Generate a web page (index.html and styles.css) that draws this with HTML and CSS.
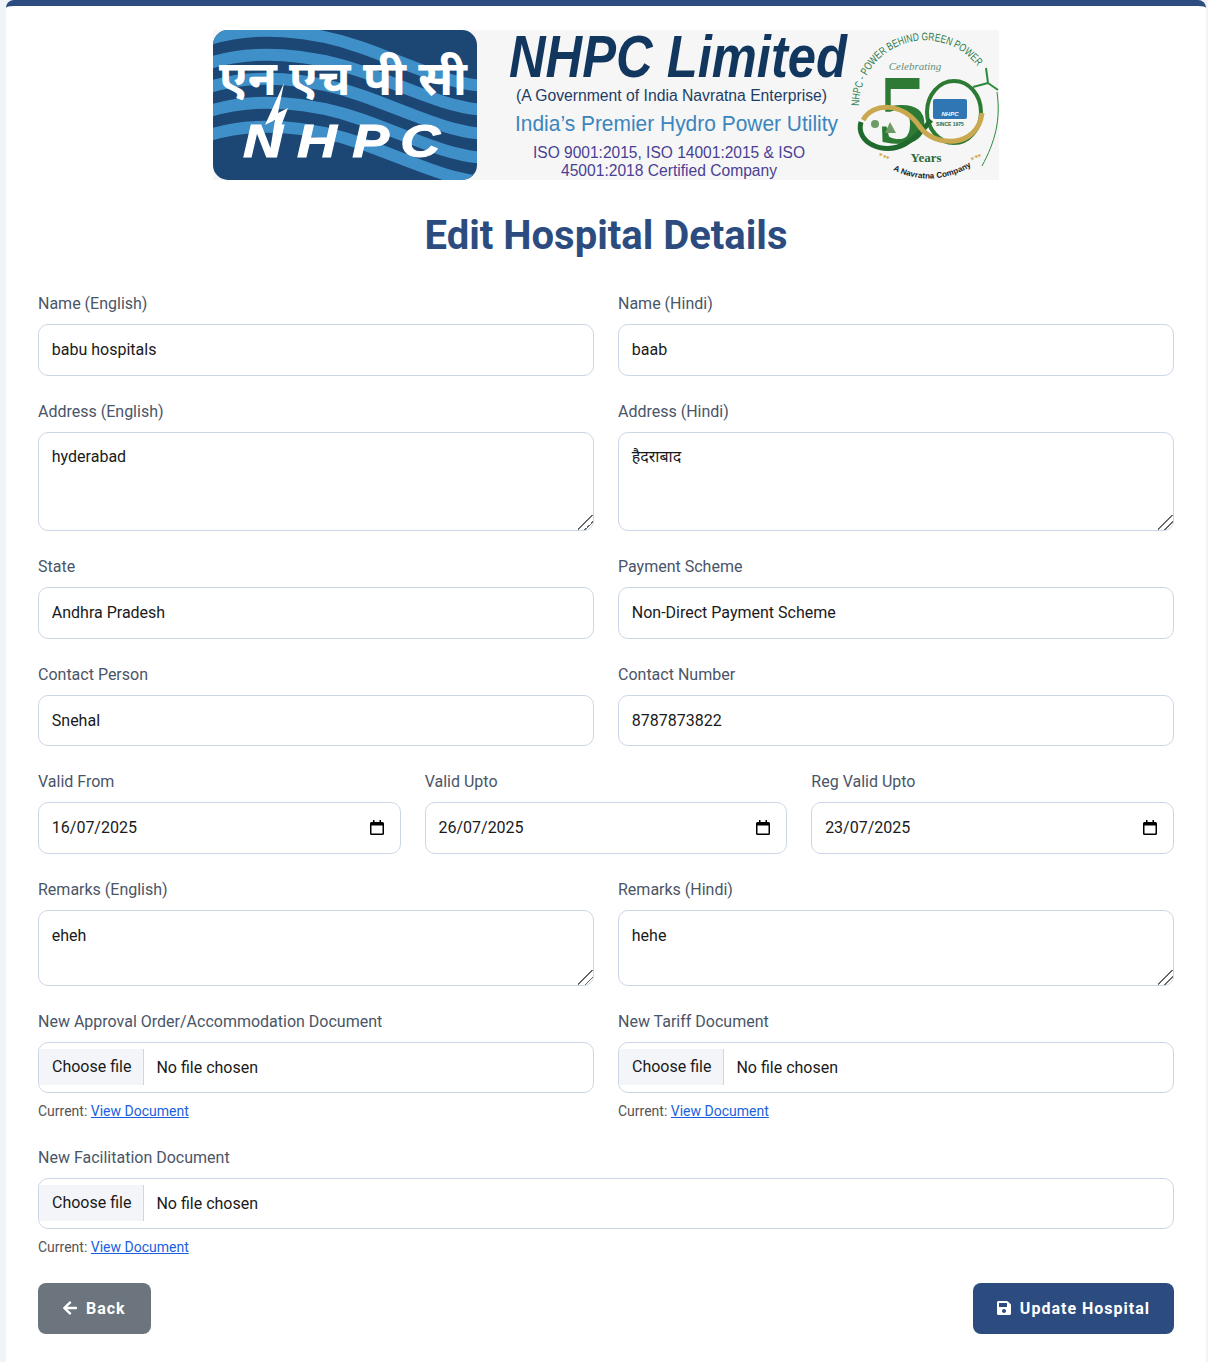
FILE: index.html
```html
<!DOCTYPE html>
<html lang="en">
<head>
    <meta charset="UTF-8">
    <meta name="viewport" content="width=device-width, initial-scale=1.0">
    <title>Edit Hospital Details</title>
    <link rel="stylesheet" href="styles.css">
</head>
<body>
    <div class="card">
        <!-- Banner -->
        <svg class="banner" viewBox="0 0 786 150" width="786" height="150" role="img" aria-label="NHPC Limited">
            <defs>
                <clipPath id="logoClip"><rect width="264" height="150" rx="15"/></clipPath>
                <path id="wave" d="M-6 16 C 40 0, 100 6, 150 24 S 235 60, 272 62" fill="none" stroke="#3f8fc8" stroke-width="12"/>
                <path id="arcTop" d="M646 76 A 66 66 0 0 1 765 37"/>
                <path id="arcBottom" d="M680 140 A 80 80 0 0 0 757 137"/>
            </defs>
            <rect width="786" height="150" fill="#f6f6f6"/>
            <g clip-path="url(#logoClip)">
                <rect width="264" height="150" fill="#1c4673"/>
                <use href="#wave" y="-6"/>
                <use href="#wave" y="18"/>
                <use href="#wave" y="42"/>
                <use href="#wave" y="66"/>
                <use href="#wave" y="90"/>
            </g>
            <text class="logo-hindi" x="6" y="65" textLength="248" lengthAdjust="spacingAndGlyphs">एन एच पी सी</text>
            <text class="logo-nhpc" transform="translate(0 127) scale(1.2 1)" x="25 70 116 156" y="0">NHPC</text>
            <path d="M71 53 L52 95 L62 90 L56 127 L75 78 L65 83 Z" fill="#fff"/>

            <text class="b-title" x="296" y="47" textLength="338" lengthAdjust="spacingAndGlyphs">NHPC Limited</text>
            <text class="b-govt" x="303" y="71" textLength="311" lengthAdjust="spacingAndGlyphs">(A Government of India Navratna Enterprise)</text>
            <text class="b-utility" x="302" y="101" textLength="323" lengthAdjust="spacingAndGlyphs">India’s Premier Hydro Power Utility</text>
            <text class="b-iso" x="320" y="128" textLength="272" lengthAdjust="spacingAndGlyphs">ISO 9001:2015, ISO 14001:2015 &amp; ISO</text>
            <text class="b-iso" x="348" y="146" textLength="216" lengthAdjust="spacingAndGlyphs">45001:2018 Certified Company</text>

            <!-- 50 years emblem -->
            <text class="e-arc"><textPath href="#arcTop" textLength="164" lengthAdjust="spacingAndGlyphs">NHPC - POWER BEHIND GREEN POWER</textPath></text>
            <text class="e-celebrate" x="702" y="40">Celebrating</text>
            <text class="e-five" x="690" y="113">5</text>
            <ellipse cx="741" cy="82" rx="27" ry="31" fill="none" stroke="#2c7a34" stroke-width="4"/>
            <path d="M648 92 C 642 112, 670 126, 692 114 C 704 107, 712 98, 718 90" fill="none" stroke="#1f6a2c" stroke-width="5"/>
            <path d="M650 90 C 660 72, 690 72, 707 97 C 722 118, 765 118, 769 83" fill="none" stroke="#c9a84f" stroke-width="5"/>
            <rect x="720" y="69" width="34" height="20" rx="2" fill="#2f76b5"/>
            <text class="e-mini" x="737" y="86">NHPC</text>
            <text class="e-since" x="737" y="96">SINCE 1975</text>
            <circle cx="662" cy="94" r="4" fill="#6d9c68"/>
            <path d="M672 103 l5 -11 l6 11 Z" fill="#6d9c68"/>
            <path d="M775 53 L773 38 M775 53 L760 57 M775 53 L785 60" stroke="#2c8a3c" stroke-width="2" fill="none"/>
            <path d="M784 62 C 788 90, 782 112, 769 136" stroke="#2c8a3c" stroke-width="1" fill="none"/>
            <text class="e-years" x="713" y="132">Years</text>
            <text class="e-stars" transform="translate(665 125) rotate(25)">★★★</text>
            <text class="e-stars" transform="translate(758 131) rotate(-25)">★★★</text>
            <text class="e-navratna"><textPath href="#arcBottom" textLength="82" lengthAdjust="spacingAndGlyphs">A Navratna Company</textPath></text>
        </svg>

        <h1>Edit Hospital Details</h1>

        <form class="hospital-form">
            <div class="row two">
                <div class="field">
                    <label>Name (English)</label>
                    <input type="text" value="babu hospitals">
                </div>
                <div class="field">
                    <label>Name (Hindi)</label>
                    <input type="text" value="baab">
                </div>
            </div>

            <div class="row two">
                <div class="field">
                    <label>Address (English)</label>
                    <textarea rows="3">hyderabad</textarea>
                </div>
                <div class="field">
                    <label>Address (Hindi)</label>
                    <textarea rows="3">हैदराबाद</textarea>
                </div>
            </div>

            <div class="row two">
                <div class="field">
                    <label>State</label>
                    <input type="text" value="Andhra Pradesh">
                </div>
                <div class="field">
                    <label>Payment Scheme</label>
                    <input type="text" value="Non-Direct Payment Scheme">
                </div>
            </div>

            <div class="row two">
                <div class="field">
                    <label>Contact Person</label>
                    <input type="text" value="Snehal">
                </div>
                <div class="field">
                    <label>Contact Number</label>
                    <input type="text" value="8787873822">
                </div>
            </div>

            <div class="row three">
                <div class="field">
                    <label>Valid From</label>
                    <div class="date-input">
                        <input type="text" value="16/07/2025">
                        <svg viewBox="0 0 14 15" width="14" height="15"><path d="M3 0v2H1.500A1.500 1.500 0 0 0 0 3.500v10A1.500 1.500 0 0 0 1.500 15h11a1.500 1.500 0 0 0 1.500-1.500v-10A1.500 1.500 0 0 0 12.500 2H11V0H9.500v2h-5V0zM1.500 5.500h11v8h-11z" fill="#000"/></svg>
                    </div>
                </div>
                <div class="field">
                    <label>Valid Upto</label>
                    <div class="date-input">
                        <input type="text" value="26/07/2025">
                        <svg viewBox="0 0 14 15" width="14" height="15"><path d="M3 0v2H1.500A1.500 1.500 0 0 0 0 3.500v10A1.500 1.500 0 0 0 1.500 15h11a1.500 1.500 0 0 0 1.500-1.500v-10A1.500 1.500 0 0 0 12.500 2H11V0H9.500v2h-5V0zM1.500 5.500h11v8h-11z" fill="#000"/></svg>
                    </div>
                </div>
                <div class="field">
                    <label>Reg Valid Upto</label>
                    <div class="date-input">
                        <input type="text" value="23/07/2025">
                        <svg viewBox="0 0 14 15" width="14" height="15"><path d="M3 0v2H1.500A1.500 1.500 0 0 0 0 3.500v10A1.500 1.500 0 0 0 1.500 15h11a1.500 1.500 0 0 0 1.500-1.500v-10A1.500 1.500 0 0 0 12.500 2H11V0H9.500v2h-5V0zM1.500 5.500h11v8h-11z" fill="#000"/></svg>
                    </div>
                </div>
            </div>

            <div class="row two">
                <div class="field">
                    <label>Remarks (English)</label>
                    <textarea rows="2">eheh</textarea>
                </div>
                <div class="field">
                    <label>Remarks (Hindi)</label>
                    <textarea rows="2">hehe</textarea>
                </div>
            </div>

            <div class="row two">
                <div class="field">
                    <label>New Approval Order/Accommodation Document</label>
                    <div class="file-input"><span class="file-btn">Choose file</span><span>No file chosen</span></div>
                    <small>Current: <a href="#">View Document</a></small>
                </div>
                <div class="field">
                    <label>New Tariff Document</label>
                    <div class="file-input"><span class="file-btn">Choose file</span><span>No file chosen</span></div>
                    <small>Current: <a href="#">View Document</a></small>
                </div>
            </div>

            <div class="row">
                <div class="field">
                    <label>New Facilitation Document</label>
                    <div class="file-input"><span class="file-btn">Choose file</span><span>No file chosen</span></div>
                    <small>Current: <a href="#">View Document</a></small>
                </div>
            </div>

            <!-- Actions -->
            <div class="actions">
                <a href="#" class="btn btn-back">
                    <svg viewBox="0 0 448 512" width="14" height="16"><path fill="currentColor" d="M257.500 445.100l-22.200 22.200c-9.400 9.400-24.600 9.400-33.900 0L7 273c-9.400-9.400-9.400-24.600 0-33.900L201.400 44.700c9.400-9.400 24.600-9.400 33.900 0l22.200 22.200c9.500 9.500 9.300 25-.4 34.300L136.600 216H424c13.300 0 24 10.700 24 24v32c0 13.300-10.700 24-24 24H136.600l120.500 114.800c9.800 9.300 10 24.800.4 34.300z"/></svg>
                    Back
                </a>
                <button type="submit" class="btn btn-update">
                    <svg viewBox="0 0 448 512" width="14" height="16"><path fill="currentColor" d="M433.941 129.941l-83.882-83.882A48 48 0 0 0 316.118 32H48C21.490 32 0 53.490 0 80v352c0 26.510 21.490 48 48 48h352c26.510 0 48-21.490 48-48V163.882a48 48 0 0 0-14.059-33.941zM224 416c-35.346 0-64-28.654-64-64 0-35.346 28.654-64 64-64s64 28.654 64 64c0 35.346-28.654 64-64 64zm96-304.520V212c0 6.627-5.373 12-12 12H76c-6.627 0-12-5.373-12-12V108c0-6.627 5.373-12 12-12h228.520c3.183 0 6.235 1.264 8.485 3.515l3.480 3.480A11.996 11.996 0 0 1 320 111.480z"/></svg>
                    Update Hospital
                </button>
            </div>
        </form>
    </div>
</body>
</html>
```

FILE: styles.css
```css
body {
    font-family: Roboto, "Noto Sans", sans-serif;
    margin: 0;
    padding: 0;
    background-color: #f0f4f8;
}

.card {
    width: 1200px;
    margin-left: 6px;
    padding: 24px 32px 28px;
    box-sizing: border-box;
    background-color: white;
    border-top: 6px solid #2c4c7f;
    border-radius: 8px 8px 0 0;
}

/* Banner */
.banner {
    display: block;
    margin: 0 auto 26px;
}

.banner text {
    font-family: "Liberation Sans", sans-serif;
}

.banner .logo-hindi {
    font-family: "Noto Sans", "Liberation Sans", sans-serif;
    font-size: 48px;
    font-weight: 700;
    fill: #fff;
}

.banner .logo-nhpc {
    font-size: 46px;
    font-weight: 700;
    font-style: italic;
    fill: #fff;
    stroke: #fff;
    stroke-width: 1px;
}

.banner .b-title {
    font-size: 60px;
    font-weight: 700;
    font-style: italic;
    fill: #12375f;
}

.banner .b-govt {
    font-size: 16px;
    fill: #1d3d66;
}

.banner .b-utility {
    font-size: 22px;
    fill: #3d85bd;
}

.banner .b-iso {
    font-size: 16px;
    fill: #4a3f94;
}

.banner .e-arc {
    font-size: 11px;
    fill: #2c7a4a;
}

.banner .e-celebrate {
    font-family: "Liberation Serif", serif;
    font-size: 11px;
    font-style: italic;
    fill: #5f8f78;
    text-anchor: middle;
}

.banner .e-five {
    font-family: "Liberation Serif", serif;
    font-size: 100px;
    font-weight: 700;
    fill: #2c7a34;
    text-anchor: middle;
}

.banner .e-mini {
    font-size: 6px;
    font-weight: 700;
    font-style: italic;
    fill: #fff;
    text-anchor: middle;
}

.banner .e-since {
    font-size: 5px;
    font-weight: 700;
    fill: #2c6a3c;
    text-anchor: middle;
}

.banner .e-years {
    font-family: "Liberation Serif", serif;
    font-size: 13px;
    font-weight: 700;
    fill: #2c6a3c;
    text-anchor: middle;
}

.banner .e-stars {
    font-size: 5px;
    fill: #d0a040;
}

.banner .e-navratna {
    font-size: 8px;
    font-weight: 700;
    fill: #222;
}

h1 {
    color: #2c4c7f;
    font-size: 40px;
    font-weight: 700;
    line-height: 60px;
    text-align: center;
    margin: 0 0 26px;
}

/* Form */
.row {
    display: grid;
    grid-template-columns: 1fr;
    gap: 24px;
    margin-bottom: 24px;
}

.row.two {
    grid-template-columns: 1fr 1fr;
}

.row.three {
    grid-template-columns: 1fr 1fr 1fr;
}

.field {
    min-width: 0;
}

label {
    display: block;
    color: #4a5568;
    font-size: 16px;
    line-height: 24px;
    margin-bottom: 8px;
}

input, textarea {
    display: block;
    width: 100%;
    box-sizing: border-box;
    font-family: inherit;
    font-size: 16px;
    line-height: 24px;
    color: #1a1a1a;
    padding: 12.8px;
    background-color: white;
    border: 1px solid #ccd6e6;
    border-radius: 10px;
    outline: none;
}

textarea {
    resize: vertical;
}

textarea::-webkit-resizer {
    background: linear-gradient(135deg,
        transparent 46%, #666 46%, #666 51%, transparent 51%,
        transparent 70%, #666 70%, #666 75%, transparent 75%);
}

input[type="text"] {
    height: 51.6px;
}

.file-input {
    display: flex;
    align-items: center;
    gap: 12px;
    height: 51.6px;
    box-sizing: border-box;
    border: 1px solid #ccd6e6;
    border-radius: 10px;
    font-size: 16px;
    color: #1a1a1a;
}

.file-btn {
    height: 36px;
    line-height: 36px;
    padding: 0 12px 0 13px;
    background-color: #f3f5f9;
    border-right: 1px solid #ccd6e6;
}

.date-input {
    position: relative;
}

.date-input input {
    padding-top: 12px;
    padding-bottom: 13.6px;
}

.date-input svg {
    position: absolute;
    top: 18px;
    right: 17px;
}

small {
    display: block;
    margin-top: 8px;
    color: #555;
    font-size: 14px;
    line-height: 20.4px;
}

small a {
    color: #1a5fe0;
}

/* Buttons */
.actions {
    display: flex;
    justify-content: space-between;
    margin-top: 25px;
}

.btn {
    display: inline-flex;
    align-items: center;
    gap: 9px;
    height: 51px;
    padding: 0 25px;
    box-sizing: border-box;
    border: none;
    border-radius: 8px;
    color: white;
    font-family: inherit;
    font-size: 16px;
    font-weight: 700;
    letter-spacing: 1px;
    text-decoration: none;
    cursor: pointer;
}

.btn-back {
    background-color: #6c757d;
}

.btn-update {
    padding: 0 24px;
    background-color: #2c4c7f;
}
```
